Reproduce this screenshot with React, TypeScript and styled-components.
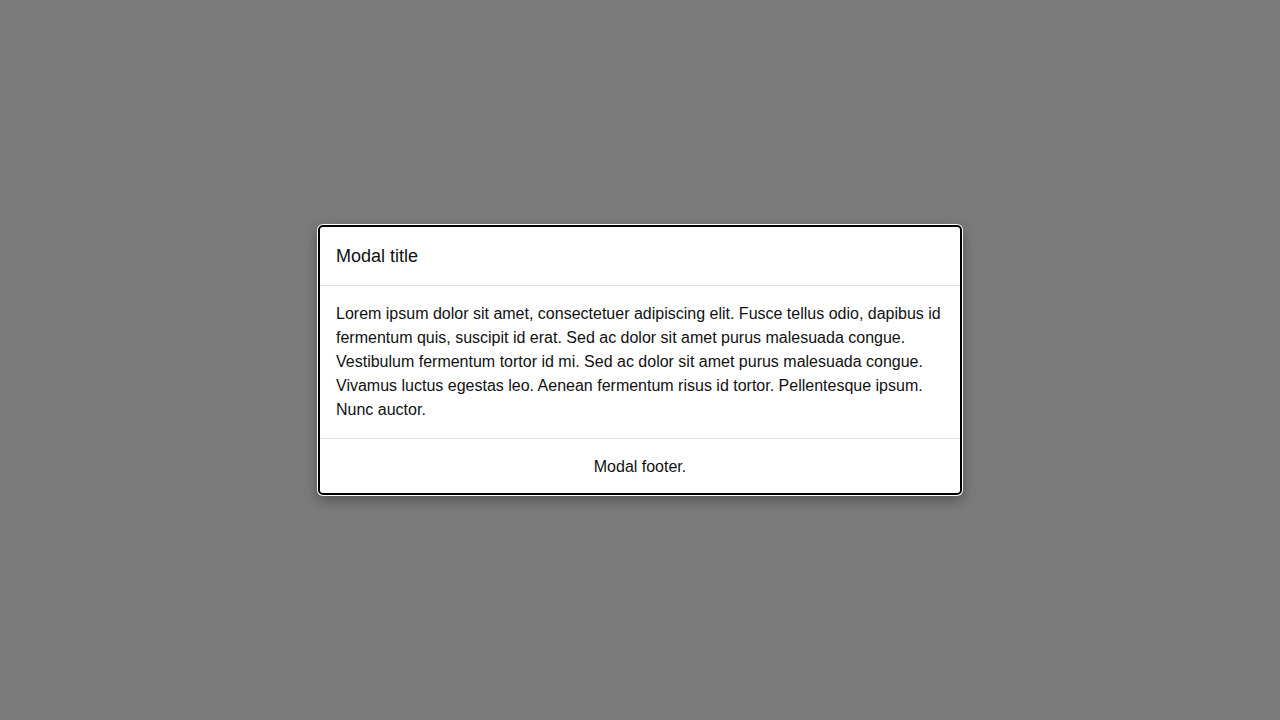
import React from 'react';
import { createGlobalStyle, styled } from 'styled-components';

const GlobalStyle = createGlobalStyle`
	html, body {
		margin: 0;
		padding: 0;
		height: 100%;
	}
	body {
		background: #7b7b7b;
		font-family: 'Liberation Sans', Arial, sans-serif;
		color: #111;
	}
	#root {
		height: 100%;
	}
`;

function App() {
	return (
		<>
			<GlobalStyle />
			<Overlay>
				<Modal>
					<Header>
						<Title>Modal title</Title>
					</Header>
					<Body>
						Lorem ipsum dolor sit amet, consectetuer adipiscing elit. Fusce tellus odio, dapibus id fermentum
						quis, suscipit id erat. Sed ac dolor sit amet purus malesuada congue. Vestibulum fermentum tortor id
						mi. Sed ac dolor sit amet purus malesuada congue. Vivamus luctus egestas leo. Aenean fermentum risus
						id tortor. Pellentesque ipsum. Nunc auctor.
					</Body>
					<Footer>Modal footer.</Footer>
				</Modal>
			</Overlay>
		</>
	);
}

export default App;

const Overlay = styled.div`
	height: 720px;
	display: flex;
	align-items: center;
	justify-content: center;
`;

const Modal = styled.div`
	width: 640px;
	background: #fff;
	border: 2px solid #000;
	border-radius: 5px;
	box-shadow: 0 0 0 1px #fff, 0 5px 14px rgba(0, 0, 0, 0.35);
	display: flex;
	flex-direction: column;
`;

const Header = styled.div`
	height: 58px;
	padding: 0 16px;
	display: flex;
	align-items: center;
	border-bottom: 1px solid #e3e3e3;
`;

const Title = styled.h2`
	margin: 0;
	font-size: 18px;
	font-weight: 400;
`;

const Body = styled.div`
	padding: 16px;
	font-size: 16px;
	line-height: 24px;
	border-bottom: 1px solid #e3e3e3;
`;

const Footer = styled.div`
	height: 54px;
	box-sizing: border-box;
	padding-top: 2px;
	display: flex;
	align-items: center;
	justify-content: center;
	font-size: 16px;
`;
